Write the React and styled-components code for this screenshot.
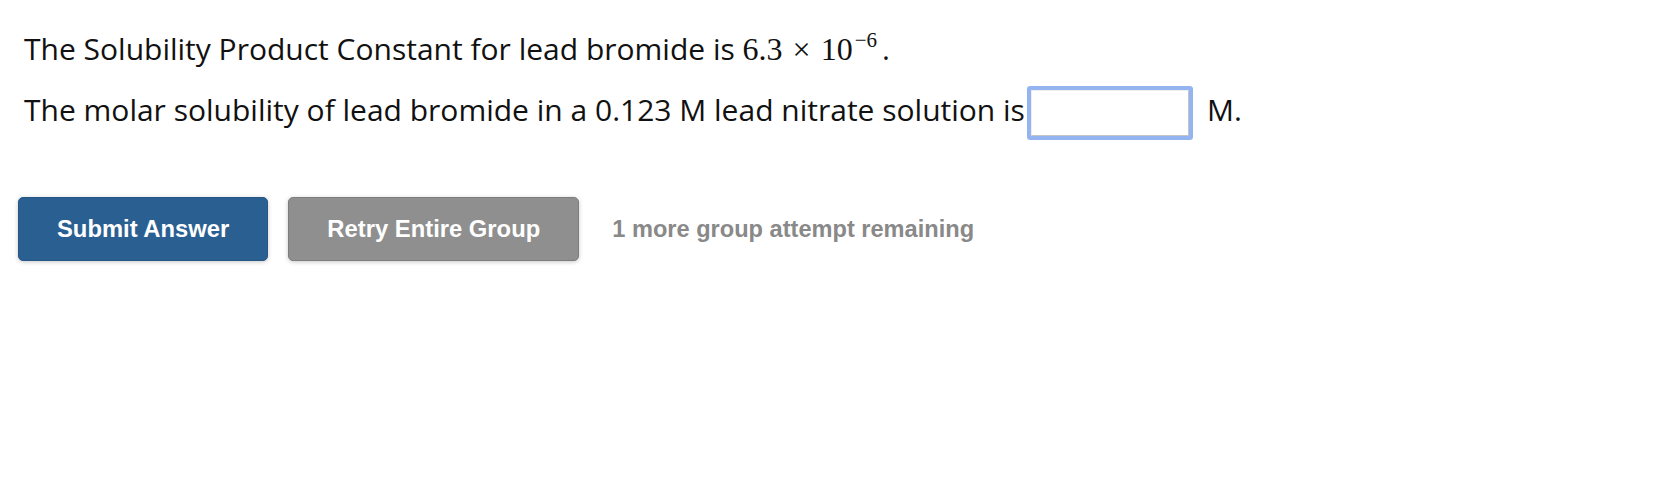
import React from "react";
import styled, { createGlobalStyle } from "styled-components";

const GlobalStyle = createGlobalStyle`
  body {
    margin: 0;
    background: #fff;
  }
`;

const Page = styled.main`
  padding: 29px 18px 0;
  box-sizing: border-box;
  height: 504px;
`;

const Question = styled.div`
  padding-left: 6px;
  font-family: "Open Sans", "Noto Sans", sans-serif;
  font-size: 30px;
  color: #111;
`;

const Line = styled.p`
  margin: 0;
  line-height: 40px;
  white-space: nowrap;

  & + & {
    margin-top: 21px;
  }
`;

const MathExpr = styled.span`
  font-family: "Liberation Serif", "DejaVu Serif", serif;
  font-size: 32px;
  line-height: 1;
  margin-right: 5px;
`;

const Times = styled.span`
  margin: 0 10px;
`;

const Sup = styled.span`
  font-size: 21px;
  line-height: 0;
  vertical-align: 13px;
  margin-left: 2px;
`;

const AnswerInput = styled.input`
  box-sizing: border-box;
  width: 158px;
  height: 46px;
  margin: 0 0 0 6px;
  vertical-align: middle;
  border: 1px solid;
  border-color: #eeeeee #c4c4c4 #c4c4c4 #eeeeee;
  border-radius: 1px;
  box-shadow: 0 0 0 4px #94b3f1;
  background: #fff;
  outline: none;
`;

const Unit = styled.span`
  margin-left: 18px;
`;

const Actions = styled.div`
  display: flex;
  align-items: center;
  gap: 20px;
  margin-top: 61px;
`;

const Button = styled.button`
  box-sizing: border-box;
  height: 64px;
  padding: 0 38px;
  border: 1px solid ${(p) => (p.$variant === "primary" ? "#265785" : "#7d7d7d")};
  border-radius: 5px;
  background: ${(p) => (p.$variant === "primary" ? "#2a5f91" : "#8f8f8f")};
  color: #fff;
  font-family: "Liberation Sans", Arial, sans-serif;
  font-weight: bold;
  font-size: 23.8px;
  box-shadow: 0 1px 4px rgba(0, 0, 0, 0.22);
  cursor: pointer;
`;

const Attempts = styled.span`
  margin-left: 13px;
  font-family: "Liberation Sans", Arial, sans-serif;
  font-weight: bold;
  font-size: 23.6px;
  color: #898989;
`;

export default function App() {
  return (
    <>
      <GlobalStyle />
      <Page>
        <Question>
          <Line>
            The Solubility Product Constant for lead bromide is{" "}
            <MathExpr>
              6.3<Times>×</Times>10<Sup>−6</Sup>
            </MathExpr>
            .
          </Line>
          <Line>
            The molar solubility of lead bromide in a 0.123 M lead nitrate solution is
            <AnswerInput type="text" aria-label="answer" />
            <Unit>M.</Unit>
          </Line>
        </Question>
        <Actions>
          <Button $variant="primary">Submit Answer</Button>
          <Button>Retry Entire Group</Button>
          <Attempts>1 more group attempt remaining</Attempts>
        </Actions>
      </Page>
    </>
  );
}
